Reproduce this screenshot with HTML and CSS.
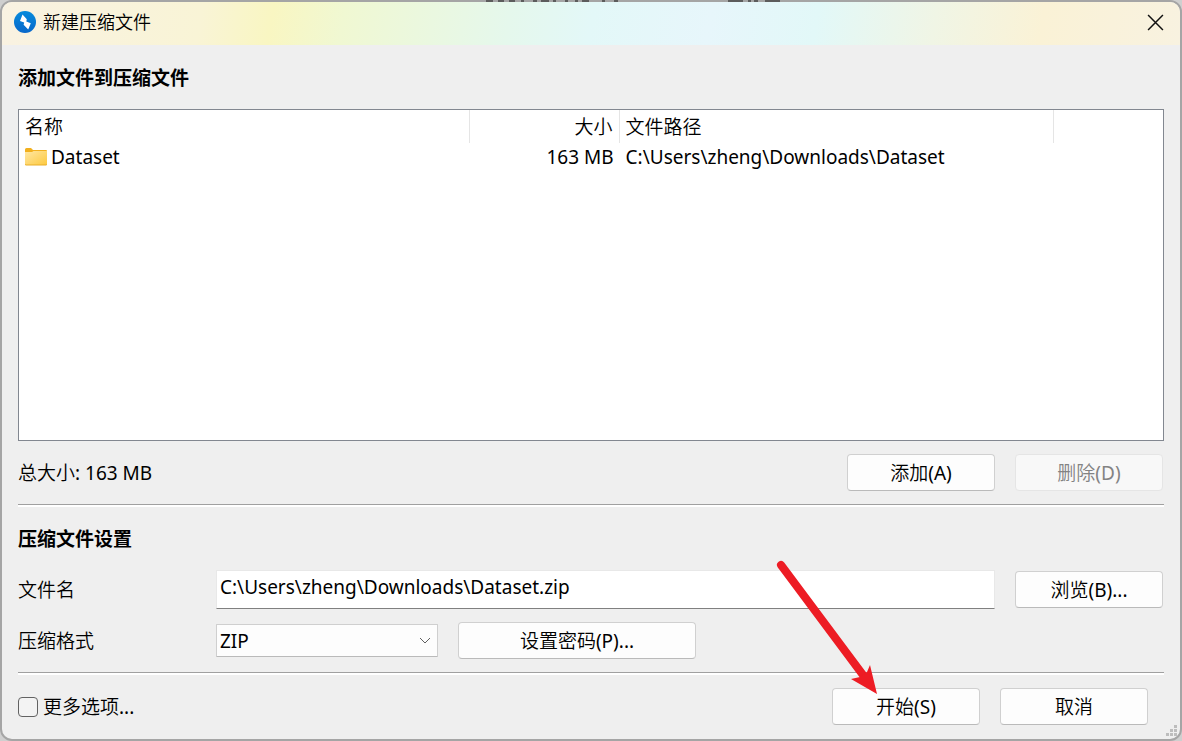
FILE: index.html
```html
<!DOCTYPE html>
<html lang="zh-CN">
<head>
<meta charset="utf-8">
<title>新建压缩文件</title>
<link rel="stylesheet" href="styles.css">
</head>
<body>
<main class="window">
  <header class="titlebar">
    <svg class="app-icon" viewBox="0 0 22 22" aria-hidden="true">
      <defs><linearGradient id="blue" x1="0" y1="0" x2="0" y2="1"><stop offset="0" stop-color="#078bdc"/><stop offset="1" stop-color="#0867ca"/></linearGradient></defs>
      <circle cx="11" cy="11" r="11" fill="url(#blue)"/>
      <path d="M8.500 3.500L12.800 8.300l-.5 2.200 4.500 1.700-2.600 6.300L9.600 13.700l.6-2.200L6 10z" fill="#fff"/>
    </svg>
    <h1 class="title">新建压缩文件</h1>
    <button class="close" type="button" aria-label="关闭">
      <svg viewBox="0 0 16 16" aria-hidden="true"><path d="M1 1l14 14M15 1L1 15"/></svg>
    </button>
  </header>
  <form class="content">
    <h2 class="heading">添加文件到压缩文件</h2>
    <div class="list">
      <table class="files">
        <colgroup><col class="col-name"><col class="col-size"><col class="col-path"><col></colgroup>
        <thead><tr><th>名称</th><th class="num">大小</th><th>文件路径</th><th class="blank"></th></tr></thead>
        <tbody><tr>
          <td><span class="file"><svg class="folder" viewBox="0 0 22 18" aria-hidden="true">
            <defs><linearGradient id="gold" x1="0" y1="0" x2="1" y2="1"><stop offset="0" stop-color="#ffe7a3"/><stop offset="1" stop-color="#fdc93f"/></linearGradient></defs>
            <path d="M0 1.500Q0 0 1.500 0H6l2 2h13q1 0 1 1v4H0z" fill="#f2b01e"/>
            <path d="M0 4h7l1.500-1H22v13q0 1-1 1H1q-1 0-1-1z" fill="url(#gold)"/>
            <path d="M0 16q0 1 1 1h20q1 0 1-1" fill="none" stroke="#e9ae28"/>
          </svg>Dataset</span></td>
          <td class="num">163 MB</td><td>C:\Users\zheng\Downloads\Dataset</td><td></td>
        </tr></tbody>
      </table>
    </div>
    <div class="row summary">
      <span class="total">总大小: 163 MB</span>
      <button class="btn" type="button">添加(A)</button>
      <button class="btn" type="button" disabled>删除(D)</button>
    </div>
    <hr class="rule">
    <h2 class="heading settings-heading">压缩文件设置</h2>
    <div class="row name-row">
      <label class="label" for="filename">文件名</label>
      <input class="filename" id="filename" type="text" value="C:\Users\zheng\Downloads\Dataset.zip">
      <button class="btn" type="button">浏览(B)...</button>
    </div>
    <div class="row format-row">
      <label class="label" for="format">压缩格式</label>
      <span class="select-box">
        <select class="format" id="format"><option>ZIP</option></select>
        <svg class="chevron" viewBox="0 0 12 8" aria-hidden="true"><path d="M1 1l5 5 5-5"/></svg>
      </span>
      <button class="btn password" type="button">设置密码(P)...</button>
    </div>
    <hr class="rule">
    <div class="row actions">
      <label class="more"><input class="check" type="checkbox">更多选项...</label>
      <span class="start">
        <button class="btn" type="submit">开始(S)</button>
        <svg class="arrow" viewBox="0 0 104 134" aria-hidden="true">
          <path d="M6 5L88 115" fill="none" stroke="#ed1c24" stroke-width="8" stroke-linecap="round"/>
          <path d="M102 134L76 119l9-2 7-5 3-7z" fill="#ed1c24"/>
        </svg>
      </span>
      <button class="btn" type="button">取消</button>
    </div>
  </form>
  <svg class="grip" viewBox="0 0 11 11" aria-hidden="true"><path d="M8 0h3v3H8zM4 4h3v3H4zM8 4h3v3H8zM0 8h3v3H0zM4 8h3v3H4zM8 8h3v3H8z"/></svg>
</main>
<svg class="edge" aria-hidden="true">
  <path d="M486 1h7M498 1h6M509 1h6M521 1h3M533 1h4M541 1h8M553 1h3M565 1h3M575 1h3M582 1h7M602 1h3M614 1h4M728 1h15M748 1h3M754 1h4M765 1h15" stroke="#5c5c5c" stroke-width="2"/>
</svg>
</body>
</html>
```
FILE: styles.css
```css
* { box-sizing: border-box; }

body {
  margin: 0;
  background: #cfcfcf;
  color: #000;
  font: 19px/26px "Noto Sans", "Noto Sans CJK SC DemiLight", "Noto Sans CJK SC", sans-serif;
}

button, input, select { font: inherit; color: inherit; }

.window {
  position: relative;
  display: flex;
  flex-direction: column;
  min-height: 100vh;
  border: 2px solid #a5a5a5;
  border-radius: 12px;
  background: #efefef;
  overflow: hidden;
}

.titlebar {
  display: flex;
  align-items: center;
  gap: 7px;
  height: 43px;
  padding: 0 16px 3px 12px;
  background: linear-gradient(100deg, #f9f2e2 0%, #f9f4d6 17%, #f9f6c2 23%, #f0f8d2 29%, #e5f8ec 43%, #e3f8f8 50%, #e7f6fb 60%, #e2f8f8 69%, #f0f5e5 79%, #faf2d6 88%, #f8f2e0 100%);
}

.app-icon { width: 22px; height: 22px; }

.title { margin: 0; font-size: 18px; font-weight: 350; }

.close {
  display: flex;
  margin-left: auto;
  padding: 0;
  border: 0;
  background: none;
}

.close svg { width: 17px; height: 17px; fill: none; stroke: #111; stroke-width: 1.400; }

.content {
  flex: 1;
  display: flex;
  flex-direction: column;
  padding: 20px 16px 14px;
}

.heading {
  margin: 0;
  font-family: "Noto Sans", "Noto Sans CJK SC", sans-serif;
  font-size: 19px;
  font-weight: 700;
}

.list {
  flex: 1;
  margin-top: 18px;
  border: 1px solid #828790;
  background: #fff;
}

.files {
  width: 100%;
  border-collapse: separate;
  border-spacing: 0;
  table-layout: fixed;
}

.col-name { width: 39.400%; }
.col-size { width: 13.100%; }
.col-path { width: 38%; }

.files th, .files td {
  padding: 0 6px;
  text-align: left;
  white-space: nowrap;
}

.files th {
  height: 33px;
  border-right: 1px solid #e5e5e5;
  background: #fff;
  font-weight: 350;
}

.files th.blank { border-right: 0; }
.files td { height: 28px; }
.files .num { text-align: right; }

.file { display: flex; align-items: center; gap: 4px; }
.folder { width: 22px; height: 18px; }

.row { display: flex; align-items: center; gap: 20px; }
.summary { margin: 13px 1px 13px 0; }
.total { margin-right: auto; }

.btn {
  width: 148px;
  height: 37px;
  padding: 0;
  border: 1px solid #d0d0d0;
  border-bottom-color: #bababa;
  border-radius: 4px;
  background: #fdfdfd;
  text-align: center;
}

.btn:disabled { border-color: #e5e5e5; background: #f8f8f8; color: #838383; }

.rule {
  width: 100%;
  height: 3px;
  margin: 0;
  border: 0;
  border-top: 1px solid #a0a0a0;
  background: #fff;
}

.settings-heading { margin-top: 19px; }
.name-row { margin: 18px 1px 0 0; }
.format-row { margin: 13px 1px 13px 0; }
.label { width: 178px; font-weight: 350; }

.filename {
  flex: 1;
  min-width: 0;
  height: 39px;
  padding: 0 3px 6px;
  border: 1px solid #e8e8e8;
  border-bottom-color: #808080;
  background: #fff;
}

.select-box { position: relative; width: 222px; }

.format {
  display: block;
  width: 100%;
  height: 33px;
  padding: 0 3px;
  border: 1px solid #cfcfcf;
  border-bottom-color: #bababa;
  border-radius: 1px;
  background: #fdfdfd;
  appearance: none;
}

.chevron {
  position: absolute;
  top: 13px;
  right: 7px;
  width: 12px;
  height: 8px;
  fill: none;
  stroke: #606060;
  pointer-events: none;
}

.password { width: 238px; }
.actions { margin: 13px 16px 0 0; }
.more { display: flex; align-items: center; gap: 5px; margin-right: auto; }

.check {
  width: 20px;
  height: 20px;
  margin: 0;
  border: 1px solid #626262;
  border-radius: 4px;
  background: #f3f3f3;
  appearance: none;
}

.start { position: relative; display: flex; }

/* The pointer lies over the form and ends on the start button. */
.arrow {
  position: absolute;
  right: 101px;
  bottom: 31px;
  width: 104px;
  height: 134px;
  pointer-events: none;
}

.grip { position: absolute; right: 3px; bottom: 3px; width: 11px; height: 11px; fill: #bdbdbd; }

/* Traces of the window behind, along the dialog's top edge. */
.edge { position: absolute; top: 0; left: 0; width: 100%; height: 2px; pointer-events: none; }
```
